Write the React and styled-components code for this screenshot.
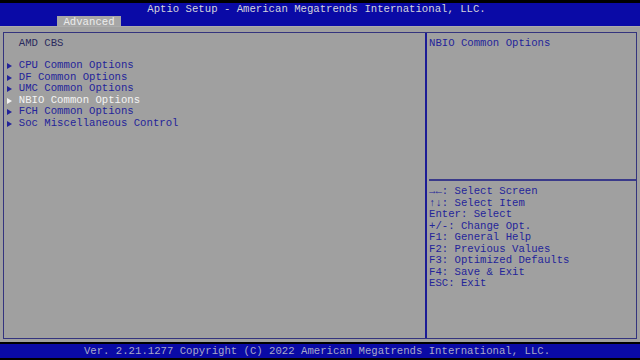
import styled, { createGlobalStyle } from 'styled-components';

const GlobalStyle = createGlobalStyle`
  html, body {
    margin: 0;
    padding: 0;
    background: #000;
  }
`;

const menuItems = [
  'CPU Common Options',
  'DF Common Options',
  'UMC Common Options',
  'NBIO Common Options',
  'FCH Common Options',
  'Soc Miscellaneous Control',
];

const helpLines = [
  '→←: Select Screen',
  '↑↓: Select Item',
  'Enter: Select',
  '+/-: Change Opt.',
  'F1: General Help',
  'F2: Previous Values',
  'F3: Optimized Defaults',
  'F4: Save & Exit',
  'ESC: Exit',
];

export default function App() {
  const selected = 3;
  return (
    <Screen>
      <GlobalStyle />
      <Header>
        <Title>Aptio Setup - American Megatrends International, LLC.</Title>
        <TabRow>
          <Tab>Advanced</Tab>
        </TabRow>
      </Header>
      <Body>
        <Frame>
          <MainPanel>
            <Heading>AMD CBS</Heading>
            <Spacer />
            {menuItems.map((item, i) => (
              <Item key={item} $active={i === selected}>
                <Marker $active={i === selected} />
                {item}
              </Item>
            ))}
          </MainPanel>
          <SidePanel>
            <HelpTop>
              <Line>NBIO Common Options</Line>
            </HelpTop>
            <HelpKeys>
              {helpLines.map(l => (
                <Line key={l}>{l}</Line>
              ))}
            </HelpKeys>
          </SidePanel>
        </Frame>
      </Body>
      <Footer>Ver. 2.21.1277 Copyright (C) 2022 American Megatrends International, LLC.</Footer>
    </Screen>
  );
}

const Screen = styled.div`
  width: 640px;
  height: 360px;
  display: flex;
  flex-direction: column;
  background: #000;
  padding-top: 3px;
  box-sizing: border-box;
  font-family: "Liberation Mono", "DejaVu Sans Mono", monospace;
  font-size: 10.65px;
  line-height: 11.5px;
  overflow: hidden;
`;

const Header = styled.div`
  height: 23px;
  background: #0a0aa6;
  display: flex;
  flex-direction: column;
  justify-content: space-between;
`;

const Title = styled.div`
  text-align: center;
  color: #d4d4dc;
  padding-top: 1px;
  padding-right: 7px;
`;

const TabRow = styled.div`
  display: flex;
  padding-left: 57px;
`;

const Tab = styled.div`
  width: 64px;
  height: 12px;
  background: #a6a6a6;
  color: #ececec;
  text-align: center;
  line-height: 12px;
`;

const Body = styled.div`
  flex: 1;
  background: #a0a0a0;
  padding: 5px 3px 3px 3px;
  display: flex;
  border-top: 1px solid #acacac;
`;

const Frame = styled.div`
  flex: 1;
  display: flex;
  border: 1px solid #34347e;
`;

const MainPanel = styled.div`
  width: 419px;
  padding: 5px 0 0 2px;
  border-right: 2px solid #1c1c96;
`;

const Heading = styled.div`
  color: #2a2a5e;
  padding-left: 12.8px;
`;

const Spacer = styled.div`
  height: 10.5px;
`;

const Item = styled.div`
  display: flex;
  align-items: center;
  color: ${p => (p.$active ? '#f4f4f4' : '#24249a')};
`;

const Marker = styled.span`
  width: 12.8px;
  height: 11.5px;
  position: relative;
  &::before {
    content: '';
    position: absolute;
    left: 1px;
    top: 3px;
    border-left: 5px solid ${p => (p.$active ? '#f4f4f4' : '#24249a')};
    border-top: 3px solid transparent;
    border-bottom: 3px solid transparent;
  }
`;

const SidePanel = styled.div`
  flex: 1;
  display: flex;
  flex-direction: column;
  padding-left: 2px;
`;

const HelpTop = styled.div`
  height: 148px;
  padding-top: 5px;
  box-sizing: border-box;
  border-bottom: 2px solid #3a3a8a;
`;

const HelpKeys = styled.div`
  padding-top: 5px;
`;

const Line = styled.div`
  color: #24249a;
  white-space: pre;
`;

const Footer = styled.div`
  height: 14px;
  margin-top: 2px;
  margin-bottom: 2px;
  background: #0a0aa6;
  color: #a8a8c8;
  text-align: center;
  line-height: 14px;
  padding-right: 6px;
`;
